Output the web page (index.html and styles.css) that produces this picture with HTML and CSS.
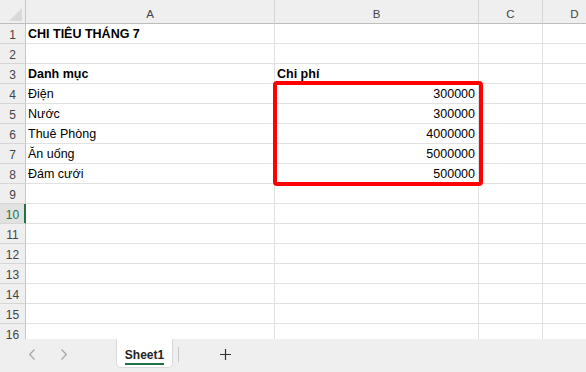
FILE: index.html
```html
<!DOCTYPE html>
<html lang="vi">
  <head>
    <meta charset="UTF-8" />
    <meta name="viewport" content="width=device-width, initial-scale=1.0" />
    <title>Chi tiêu tháng 7</title>
    <link rel="stylesheet" href="styles.css">
  </head>
  <body>
    <div class="sheet-wrap">
      <div class="sheet">
        <!-- column headers -->
        <div class="corner">
          <svg width="13" height="13" viewBox="0 0 13 13"><polygon points="13,0 13,13 0,13" fill="#d9d9d9"/></svg>
        </div>
        <div class="ch">A</div>
        <div class="ch">B</div>
        <div class="ch">C</div>
        <div class="ch">D</div>

        <div class="rh">1</div><div class="cell bold">CHI TIÊU THÁNG 7</div><div class="cell"></div><div class="cell"></div><div class="cell"></div>
        <div class="rh">2</div><div class="cell"></div><div class="cell"></div><div class="cell"></div><div class="cell"></div>
        <div class="rh">3</div><div class="cell bold">Danh mục</div><div class="cell bold">Chi phí</div><div class="cell"></div><div class="cell"></div>
        <div class="rh">4</div><div class="cell">Điện</div><div class="cell num">300000</div><div class="cell"></div><div class="cell"></div>
        <div class="rh">5</div><div class="cell">Nước</div><div class="cell num">300000</div><div class="cell"></div><div class="cell"></div>
        <div class="rh">6</div><div class="cell">Thuê Phòng</div><div class="cell num">4000000</div><div class="cell"></div><div class="cell"></div>
        <div class="rh">7</div><div class="cell">Ăn uống</div><div class="cell num">5000000</div><div class="cell"></div><div class="cell"></div>
        <div class="rh">8</div><div class="cell">Đám cưới</div><div class="cell num">500000</div><div class="cell"></div><div class="cell"></div>
        <div class="rh">9</div><div class="cell"></div><div class="cell"></div><div class="cell"></div><div class="cell"></div>
        <div class="rh sel">10</div><div class="cell"></div><div class="cell"></div><div class="cell"></div><div class="cell"></div>
        <div class="rh">11</div><div class="cell"></div><div class="cell"></div><div class="cell"></div><div class="cell"></div>
        <div class="rh">12</div><div class="cell"></div><div class="cell"></div><div class="cell"></div><div class="cell"></div>
        <div class="rh">13</div><div class="cell"></div><div class="cell"></div><div class="cell"></div><div class="cell"></div>
        <div class="rh">14</div><div class="cell"></div><div class="cell"></div><div class="cell"></div><div class="cell"></div>
        <div class="rh">15</div><div class="cell"></div><div class="cell"></div><div class="cell"></div><div class="cell"></div>
        <div class="rh">16</div><div class="cell"></div><div class="cell"></div><div class="cell"></div><div class="cell"></div>
      </div>
      <!-- red highlight around the amounts -->
      <div class="highlight"></div>
    </div>

    <div class="tabbar">
      <div class="nav">
        <svg width="6" height="11" viewBox="0 0 6 11"><polyline points="5.5,0.5 0.7,5.5 5.5,10.5" fill="none" stroke="#a6a6a6" stroke-width="1.2"/></svg>
        <svg width="6" height="11" viewBox="0 0 6 11"><polyline points="0.5,0.5 5.3,5.5 0.5,10.5" fill="none" stroke="#a6a6a6" stroke-width="1.2"/></svg>
      </div>
      <div class="tab"><span class="tab-label">Sheet1</span></div>
      <div class="tab-sep"></div>
      <svg class="add" width="11" height="11" viewBox="0 0 11 11"><path d="M5.5 0V11M0 5.5H11" stroke="#333" stroke-width="1.2"/></svg>
    </div>
  </body>
</html>
```

FILE: styles.css
```css
/* Excel-like sheet */
body {
  margin: 0;
  width: 586px;
  height: 372px;
  overflow: hidden;
  font-family: "Liberation Sans", Arial, sans-serif;
  background: #fff;
}
.sheet-wrap {
  position: relative;
  height: 339px;
  overflow: hidden;
}
.sheet {
  display: grid;
  grid-template-columns: 26px 249px 204px 64px 64px;
  grid-template-rows: 24px;
  grid-auto-rows: 20px;
}
.sheet > div {
  box-sizing: border-box;
  border-right: 1px solid #e1e1e1;
  border-bottom: 1px solid #e1e1e1;
  white-space: nowrap;
}
.sheet > .corner {
  background: #efefef;
  border-right-color: #c6c6c6;
  border-bottom-color: #bdbdbd;
  display: flex;
  align-items: flex-end;
  justify-content: flex-end;
  padding: 0 3px 2px 0;
}
.sheet > .ch {
  background: #efefef;
  border-right-color: #d6d6d6;
  border-bottom-color: #bdbdbd;
  color: #444;
  font-size: 11.5px;
  text-align: center;
  padding-top: 3px;
  line-height: 23px;
  height: 24px;
  overflow: hidden;
}
.sheet > .rh {
  background: #efefef;
  border-right-color: #c6c6c6;
  border-bottom-color: #d6d6d6;
  color: #444;
  font-size: 12px;
  text-align: center;
  padding-top: 1px;
  line-height: 20px;
}
.sheet > .rh.sel {
  background: #e1e1e1;
  color: #217346;
  border-right-color: #217346;
  box-shadow: inset -1px 0 0 #217346;
}
.cell {
  font-size: 12.5px;
  color: #000;
  line-height: 20px;
  padding: 0 3px 0 2px;
}
.bold {
  font-weight: bold;
}
.num {
  text-align: right;
}
.highlight {
  position: absolute;
  left: 273px;
  top: 81px;
  width: 210px;
  height: 105px;
  box-sizing: border-box;
  border: 4px solid #ff0000;
  border-radius: 4px;
}
.tabbar {
  display: flex;
  align-items: flex-start;
  height: 33px;
  background: #efefef;
}
.nav {
  display: flex;
  gap: 26px;
  margin: 10px 0 0 29px;
}
.tab {
  box-sizing: border-box;
  width: 57px;
  height: 29px;
  margin-left: 49px;
  background: #fff;
  border: 1px solid #dadada;
  border-top: none;
  border-radius: 0 0 5px 5px;
  text-align: center;
  padding-top: 6px;
}
.tab-label {
  display: inline-block;
  font-size: 12px;
  font-weight: bold;
  color: #242424;
  line-height: 16px;
  border-bottom: 2px solid #217346;
}
.tab-sep {
  width: 1px;
  height: 15px;
  margin: 8px 0 0 5px;
  background: #c8c8c8;
}
.add {
  margin: 10px 0 0 41px;
}
```
